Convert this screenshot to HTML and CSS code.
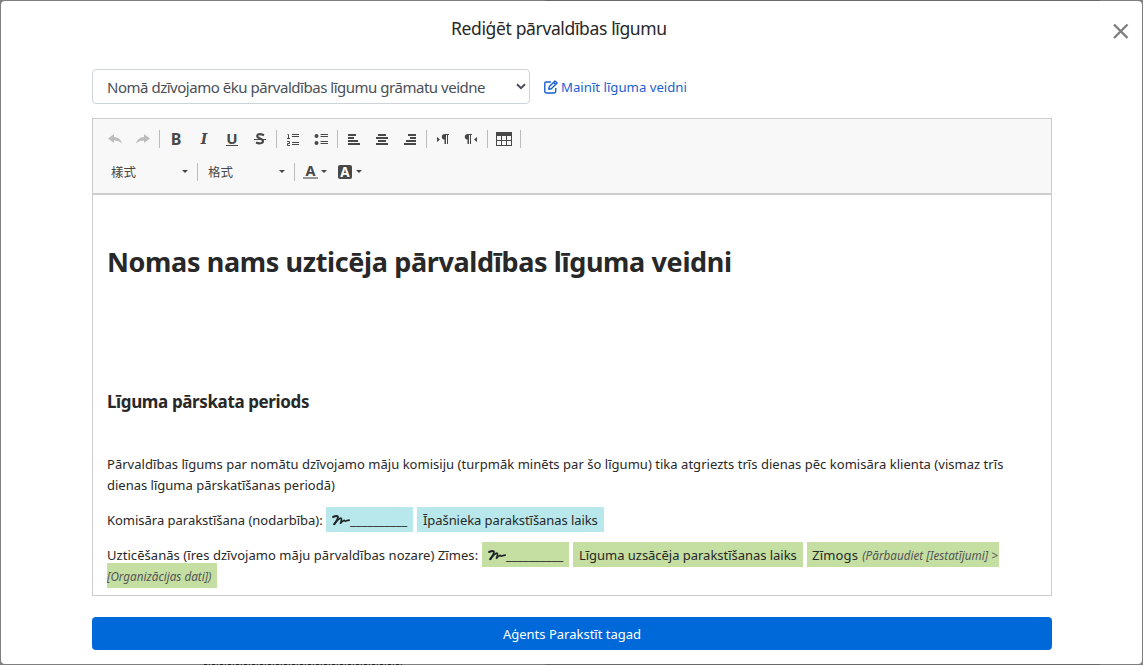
FILE: index.html
```html
<!DOCTYPE html>
<html lang="lv">
<head>
<meta charset="utf-8">
<title>Rediģēt pārvaldības līgumu</title>
<link rel="stylesheet" href="styles.css">
</head>
<body>
<div class="modal">
  <header class="modal-head">
    <h1 class="title"><span>Rediģēt pārvaldības līgumu</span></h1>
    <button class="close" aria-label="Aizvērt"><svg width="16" height="16" viewBox="0 0 16 16"><path d="M1 1.500L14.500 15M14.500 1.500L1 15" stroke="#7f7f7f" stroke-width="2.400" fill="none"/></svg></button>
  </header>
  <div class="content">
    <div class="picker">
      <div class="select"><span class="select-text">Nomā dzīvojamo ēku pārvaldības līgumu grāmatu veidne</span><svg width="10" height="7" viewBox="0 0 10 7"><path d="M1 1.2L5 5.2L9 1.2" fill="none" stroke="#495057" stroke-width="2"/></svg></div>
      <a class="edit"><svg width="14" height="14" viewBox="0 0 14 14" fill="none" stroke="#1a5fd0" stroke-width="1.4" stroke-linejoin="round"><path d="M7 2H2.2Q.8 2 .8 3.4V11.6Q.8 13 2.2 13H10.3Q11.7 13 11.7 11.6V8"/><path d="M4.8 9.2L5.2 6.7L11 .9L13.1 3L7.3 8.8ZM9.5 2.4L11.6 4.5"/></svg><span>Mainīt līguma veidni</span></a>
    </div>
    <div class="editor">
      <div class="toolbar">
        <div class="row">
          <i class="btn"><svg width="16" height="16" viewBox="0 0 16 16"><path d="M1 7.5L7 3V6Q13 6 15 12.5Q12 9.5 7 9.5V12Z" fill="#bdbdbd"/></svg></i>
          <i class="btn"><svg width="16" height="16" viewBox="0 0 16 16"><path d="M15 7.5L9 3V6Q3 6 1 12.5Q4 9.5 9 9.5V12Z" fill="#bdbdbd"/></svg></i>
          <i class="sep"></i>
          <i class="btn"><b class="g">B</b></i>
          <i class="btn"><b class="g it">I</b></i>
          <i class="btn"><b class="g un">U</b></i>
          <i class="btn"><svg width="16" height="16" viewBox="0 0 16 16"><path d="M12 4.200Q8 2.500 6 3.500Q4 5.500 7 7L10.500 8.800Q12 11 9.500 12Q7 12.800 4 11.500" fill="none" stroke="#484848" stroke-width="2.200"/><path d="M2 8.500H14" stroke="#484848"/></svg></i>
          <i class="sep"></i>
          <i class="btn num"><svg width="16" height="16" viewBox="0 0 16 16" fill="none" stroke="#484848"><path d="M6 3.500H13M6 5.500H13M6 11.500H13M6 13.500H13"/><path d="M1.500 3.500H2.500V7.500M1 7.500H4M1 10.500H3.500V12.500H1.500V14.500H4"/></svg></i>
          <i class="btn"><svg width="16" height="16" viewBox="0 0 16 16"><circle cx="3.5" cy="5" r="2" fill="#484848"/><circle cx="3.5" cy="12" r="2" fill="#484848"/><path d="M7.500 3.500H15M7.500 5.500H15M7.500 10.500H15M7.500 12.500H15" stroke="#484848"/></svg></i>
          <i class="sep"></i>
          <i class="btn"><svg width="16" height="16" viewBox="0 0 16 16"><path d="M2 3H10V5H2ZM2 6H8V8H2ZM2 9H12V11H2ZM2 12H14V14H2Z" fill="#484848"/></svg></i>
          <i class="btn"><svg width="16" height="16" viewBox="0 0 16 16"><path d="M4 3H12V5H4ZM2 6H14V8H2ZM4 9H12V11H4ZM2 12H14V14H2Z" fill="#484848"/></svg></i>
          <i class="btn"><svg width="16" height="16" viewBox="0 0 16 16"><path d="M6 3H14V5H6ZM8 6H14V8H8ZM4 9H14V11H4ZM2 12H14V14H2Z" fill="#484848"/></svg></i>
          <i class="sep"></i>
          <i class="btn"><svg width="16" height="16" viewBox="0 0 16 16"><path d="M2 6L5 8.500L2 11ZM10 3H14V4H13V13H12V4H11V13H9.500V8.500Q6.800 8.500 6.800 5.700Q6.800 3 10 3Z" fill="#484848"/></svg></i>
          <i class="btn"><svg width="16" height="16" viewBox="0 0 16 16"><path d="M14 6L11 8.500L14 11ZM5 3H9V4H8V13H7V4H6V13H4.500V8.500Q1.800 8.500 1.800 5.700Q1.800 3 5 3Z" fill="#484848"/></svg></i>
          <i class="sep"></i>
          <i class="btn"><svg width="16" height="16" viewBox="0 0 16 16"><path d="M0 1H16V15H0ZM1 5V9H5V5ZM6 5V9H10V5ZM11 5V9H15V5ZM1 10V14H5V10ZM6 10V14H10V10ZM11 10V14H15V10Z" fill="#484848" fill-rule="evenodd"/></svg></i>
          <i class="sep"></i>
        </div>
        <div class="row">
          <div class="combo"><span>樣式</span><i class="arrow"></i></div>
          <i class="sep"></i>
          <div class="combo format"><span>格式</span><i class="arrow"></i></div>
          <i class="sep"></i>
          <div class="color"><b class="fg">A</b><i class="arrow"></i></div>
          <div class="color"><b class="bg">A</b><i class="arrow"></i></div>
        </div>
      </div>
      <div class="doc">
        <h2 class="h-main"><span>Nomas nams uzticēja pārvaldības līguma veidni</span></h2>
        <h3 class="h-sub"><span>Līguma pārskata periods</span></h3>
        <p class="para"><span class="l1">Pārvaldības līgums par nomātu dzīvojamo māju komisiju (turpmāk minēts par šo līgumu) tika atgriezts trīs dienas pēc komisāra klienta (vismaz trīs</span><br><span class="l2">dienas līguma pārskatīšanas periodā)</span></p>
        <div class="line">
          <span class="lead lead1">Komisāra parakstīšana (nodarbība):</span>
          <span class="tag blue sign"><svg width="18" height="12" viewBox="0 0 18 12" fill="none" stroke="#212529" stroke-linecap="round" stroke-linejoin="round"><path d="M1.200 3Q4.500 1.200 5.800 2.500Q6.400 4.800 2.300 10.200" stroke-width="2"/><path d="M2.300 10.200Q6.500 4.300 9 4.200Q10.200 5 8.500 9.200Q10.500 7 12.300 6.300Q12.800 7.600 14.500 6.800Q16 6.200 17.200 6.200" stroke-width="1.700"/></svg><span>__________</span></span>
          <span class="tag blue t-own">Īpašnieka parakstīšanas laiks</span>
        </div>
        <div class="line">
          <span class="lead lead2">Uzticēšanās (īres dzīvojamo māju pārvaldības nozare) Zīmes:</span>
          <span class="tag green sign"><svg width="18" height="12" viewBox="0 0 18 12" fill="none" stroke="#212529" stroke-linecap="round" stroke-linejoin="round"><path d="M1.200 3Q4.500 1.200 5.800 2.500Q6.400 4.800 2.300 10.200" stroke-width="2"/><path d="M2.300 10.200Q6.500 4.300 9 4.200Q10.200 5 8.500 9.200Q10.500 7 12.300 6.300Q12.800 7.600 14.500 6.800Q16 6.200 17.200 6.200" stroke-width="1.700"/></svg><span>__________</span></span>
          <span class="tag green t-time">Līguma uzsācēja parakstīšanas laiks</span>
          <span class="tag green stamp"><span>Zīmogs</span><em>(Pārbaudiet [Iestatījumi] &gt;</em></span>
        </div>
        <div class="wrap"><span class="tag green rest"><em>[Organizācijas dati])</em></span></div>
      </div>
    </div>
    <button class="submit"><span>Aģents Parakstīt tagad</span></button>
  </div>
</div>
<div class="behind"></div>
</body>
</html>
```
FILE: styles.css
```css
* { box-sizing: border-box; }
body { margin: 0; height: 665px; padding: 1px; overflow: hidden; background: linear-gradient(90deg, #7f7f7f 0 545px, #686868 545px 1100px, #7f7f7f 1100px); font-family: "Noto Sans", "Noto Sans CJK TC", sans-serif; color: #282828; }
button { border: 0; padding: 0; font: inherit; background: none; }
.modal { width: 1141px; height: 663px; background: #fff; border-radius: 4px; }
.modal-head { height: 68px; display: flex; justify-content: space-between; padding: 15px 13px 0 450px; }
.title { margin: 0; font-size: 17.5px; line-height: 25px; font-weight: 400; letter-spacing: -.36px; white-space: nowrap; }
.close { width: 16px; height: 16px; margin-top: 7px; }
.close svg { display: block; }
.content { width: 960px; margin-left: 91px; }
.picker { height: 35px; display: flex; align-items: center; }
.select { width: 438px; height: 35px; border: 1px solid #ced4da; border-radius: 4px; display: flex; align-items: center; justify-content: space-between; padding: 0 3px 0 14px; color: #495057; font-size: 15px; white-space: nowrap; }
.select-text { letter-spacing: -.48px; }
.edit { display: flex; align-items: center; gap: 3px; margin-left: 14px; color: #1a5fd0; font-size: 13.2px; white-space: nowrap; }
.editor { margin-top: 14px; height: 478px; border: 1px solid #ccc; }
.toolbar { height: 76px; background: #f8f8f8; border-bottom: 2px solid #ccc; padding: 3px 8px 0; }
.row { height: 33px; display: flex; align-items: center; }
.btn { width: 28px; height: 28px; display: flex; align-items: center; justify-content: center; font-style: normal; }
.num { padding-left: 2px; }
.sep { width: 5px; height: 18px; padding: 0 2px; background: #bcbcbc content-box; }
.g { font: 700 16px/16px "Noto Sans", sans-serif; color: #484848; }
.it { font-family: "DejaVu Serif", serif; font-style: italic; font-size: 14px; }
.un { font-size: 15px; line-height: 13px; border-bottom: 1px solid #484848; }
.combo { width: 94px; padding: 0 7px 0 10px; display: flex; align-items: center; justify-content: space-between; font: 12.500px/18px "Noto Sans CJK TC", sans-serif; color: #484848; }
.format { width: 92px; padding-left: 8px; }
.arrow { width: 6px; height: 3px; background: #484848; clip-path: polygon(0 0, 100% 0, 50% 100%); }
.color { width: 35px; display: flex; align-items: center; gap: 3px; padding-left: 6px; }
.fg { width: 15px; height: 15px; text-align: center; font-size: 14.500px; line-height: 13px; color: #484848; border-bottom: 2px solid #999; }
.bg { width: 14px; height: 14px; margin-right: 1px; text-align: center; font-size: 13.500px; line-height: 14px; color: #fff; background: #484848; border-radius: 2px; }
.doc { padding: 46px 13px 0 14px; font-size: 13px; line-height: 21px; white-space: nowrap; }
.h-main { margin: 0; font-size: 27px; line-height: 42px; font-weight: 700; letter-spacing: -.36px; }
.h-sub { margin: 107px 0 0; font-size: 17px; line-height: 24px; font-weight: 700; letter-spacing: -.38px; }
.para { margin: 40px 0 11px; }
.l1 { letter-spacing: .032px; }
.lead { padding-top: 1px; }
.lead1 { width: 215px; letter-spacing: -.02px; }
.lead2 { width: 371px; letter-spacing: .05px; }
.line { height: 25px; margin-bottom: 10px; display: flex; align-items: center; gap: 4px; }
.tag { display: flex; align-items: center; height: 25px; padding: 1px 6px 0; }
.blue { background: #b8e8ec; }
.green { background: #c5dfa3; }
.sign { width: 87px; }
.sign svg { flex: none; }
.sign span { letter-spacing: -.05px; }
.t-own { width: 187px; letter-spacing: -.07px; }
.t-time { width: 230px; letter-spacing: -.03px; }
.stamp { padding: 1px 0 0 5px; gap: 4px; width: 192px; }
.stamp span { letter-spacing: .2px; }
.tag em { font-size: 11.700px; color: #555; }
.wrap { display: flex; margin-top: -14px; }
.rest { padding: 1px 0 0; width: 110px; }
.submit { width: 960px; height: 33px; margin-top: 21px; background: #0069d9; border-radius: 4px; color: #fff; font-size: 13px; display: flex; align-items: center; justify-content: center; }
.behind { width: 200px; height: 1px; margin-left: 203px; background: repeating-linear-gradient(90deg, #222 0 3px, #777 3px 5px, #333 5px 6px, #7f7f7f 6px 8px); }
```
